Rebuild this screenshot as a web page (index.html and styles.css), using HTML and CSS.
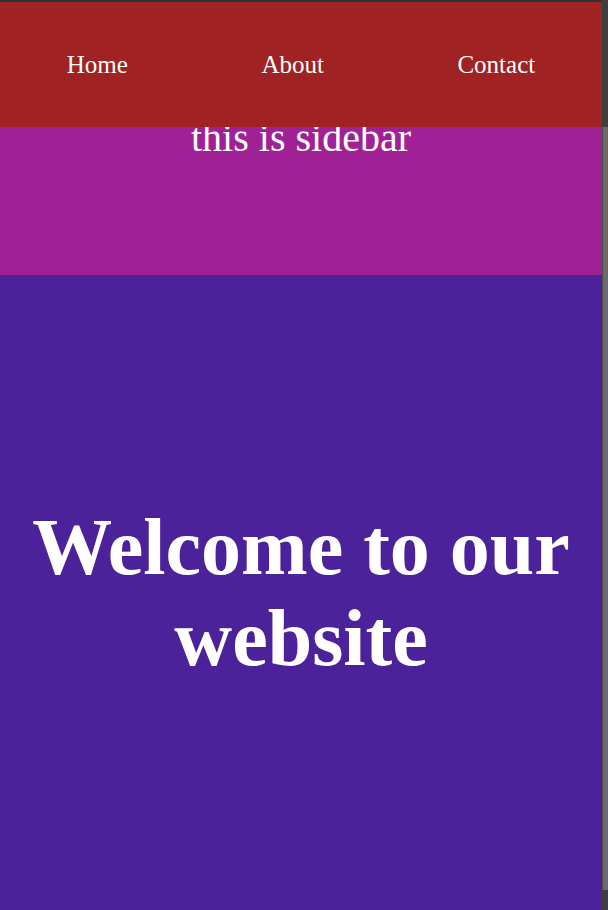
FILE: index.html
```html
<!DOCTYPE html>
<html lang="en">
<head>
<meta charset="utf-8">
<title>Welcome</title>
<link rel="stylesheet" href="styles.css">
</head>
<body>
  <div class="window">
    <div class="page">
      <nav class="topnav">
        <a class="topnav-link" href="#">Home</a>
        <a class="topnav-link" href="#">About</a>
        <a class="topnav-link" href="#">Contact</a>
      </nav>
      <aside class="sidebar">
        <p class="sidebar-text">this is sidebar</p>
      </aside>
      <main class="hero">
        <h1 class="hero-title">Welcome to our website</h1>
      </main>
    </div>
    <div class="rail" aria-hidden="true">
      <div class="rail-space rail-space-top"></div>
      <div class="rail-thumb"></div>
      <div class="rail-space rail-space-bottom"></div>
    </div>
  </div>
</body>
</html>
```
FILE: styles.css
```css
html, body {
  height: 100%;
}
body {
  margin: 0;
  overflow: hidden;
  font-family: "Liberation Serif", "Times New Roman", serif;
  color: #ffffff;
  background: #3d3d3d;
}
.window {
  height: 100%;
  display: grid;
  grid-template-columns: 1fr 6px;
}
.page {
  position: relative;
  display: flex;
  flex-direction: column;
  min-width: 0;
}
.topnav {
  position: absolute;
  top: 0;
  left: 0;
  right: 0;
  height: 125px;
  border-top: 2px solid #2f3033;
  background: #a02222;
  display: flex;
  justify-content: space-around;
  align-items: center;
  z-index: 10;
}
.topnav-link {
  color: #ffffff;
  text-decoration: none;
  font-size: 25px;
}
.sidebar {
  flex: 0 0 275px;
  background: #a02196;
  display: flex;
  align-items: center;
  justify-content: center;
}
.sidebar-text {
  margin: 0;
  font-size: 40px;
}
.hero {
  flex: 1;
  background: #4c229b;
  display: flex;
  align-items: center;
  justify-content: center;
}
.hero-title {
  margin: 0;
  font-size: 80px;
  font-weight: bold;
  text-align: center;
  line-height: normal;
}
.rail {
  display: flex;
  flex-direction: column;
  background: #3e3e3e;
}
.rail-space-top {
  flex: 0 0 127px;
}
.rail-thumb {
  flex: 1;
  background: #6b6b6b;
  border-left: 1px solid #4b4b4b;
}
.rail-space-bottom {
  flex: 0 0 20px;
}
```
